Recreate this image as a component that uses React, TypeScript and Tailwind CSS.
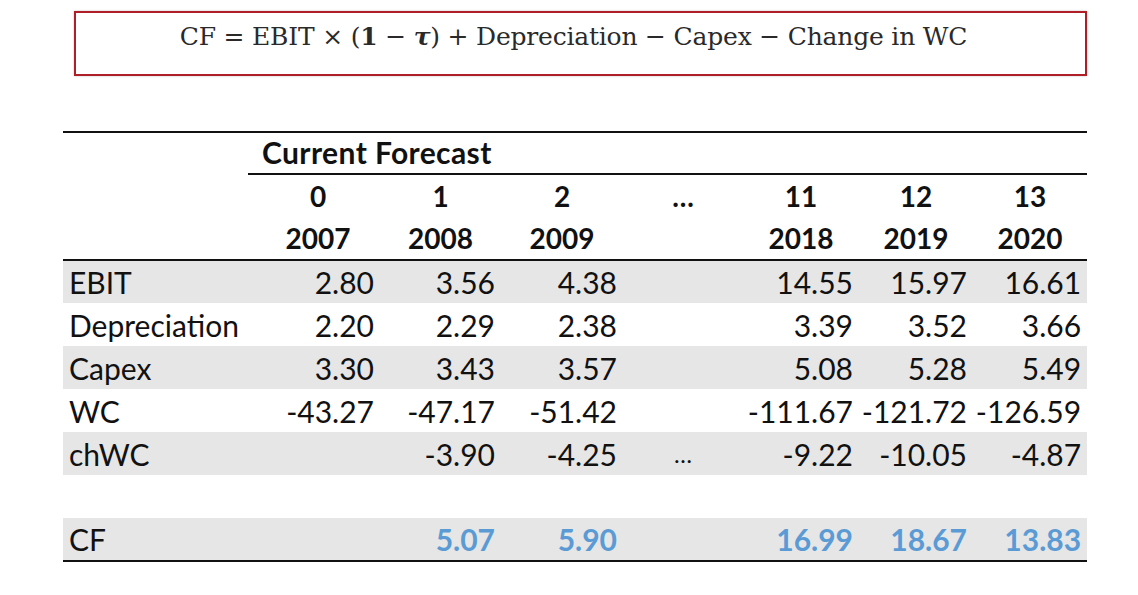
import React from "react";

const rows = [
  { label: "EBIT", vals: ["2.80", "3.56", "4.38", "", "14.55", "15.97", "16.61"], shade: true },
  { label: "Depreciation", vals: ["2.20", "2.29", "2.38", "", "3.39", "3.52", "3.66"], shade: false },
  { label: "Capex", vals: ["3.30", "3.43", "3.57", "", "5.08", "5.28", "5.49"], shade: true },
  { label: "WC", vals: ["-43.27", "-47.17", "-51.42", "", "-111.67", "-121.72", "-126.59"], shade: false },
  { label: "chWC", vals: ["", "-3.90", "-4.25", "…", "-9.22", "-10.05", "-4.87"], shade: true },
];

const periods = ["0", "1", "2", "…", "11", "12", "13"];
const years = ["2007", "2008", "2009", "", "2018", "2019", "2020"];

export default function App() {
  return (
    <div className="w-[1138px] h-[595px] bg-white text-[#111] overflow-hidden">
      <div className="ml-[74px] mt-[11px] w-[1013px] h-[65px] border-2 border-[#b01f27] shadow-[0_0_2px_rgba(0,0,0,0.25)] flex justify-center pt-[5px]">
        <div className="font-['DejaVu_Serif',serif] text-[25px] text-[#2a2a2a] tracking-[-0.2px] -ml-[14px]">
          CF = EBIT × (<span className="font-bold">1</span> − <span className="font-bold italic">τ</span>) + Depreciation − Capex − Change in WC
        </div>
      </div>

      <table className="ml-[63px] mt-[55px] w-[1024px] table-fixed border-collapse font-['Lato',sans-serif] text-[30px] leading-none">
        <colgroup>
          <col className="w-[185px]" />
          <col className="w-[132px]" />
          <col className="w-[121px]" />
          <col className="w-[122px]" />
          <col className="w-[120px]" />
          <col className="w-[116px]" />
          <col className="w-[114px]" />
          <col className="w-[114px]" />
        </colgroup>
        <thead>
          <tr className="h-[42px] border-t-2 border-[#111]">
            <th></th>
            <th colSpan={7} className="text-left font-bold text-[30px] tracking-[0.4px] pl-[14px] align-bottom pb-[6px] border-b-2 border-[#111]">
              Current Forecast
            </th>
          </tr>
          <tr className="h-[43px]">
            <th></th>
            {periods.map((p, i) => (
              <th key={i} className={`text-center font-bold text-[28px] ${i === 0 ? "pl-2" : ""}`}>
                {p}
              </th>
            ))}
          </tr>
          <tr className="h-[43px] border-b-2 border-[#111]">
            <th></th>
            {years.map((y, i) => (
              <th key={i} className={`text-center font-bold text-[28px] ${i === 0 ? "pl-2" : ""}`}>
                {y}
              </th>
            ))}
          </tr>
        </thead>
        <tbody>
          {rows.map((r) => (
            <tr key={r.label} className={`h-[43px] ${r.shade ? "bg-[#e6e6e6]" : ""}`}>
              <td className="pl-[6px] text-left">{r.label}</td>
              {r.vals.map((v, i) => (
                <td key={i} className={i === 3 ? "text-center text-[24px]" : "text-right pr-[6px]"}>
                  {v}
                </td>
              ))}
            </tr>
          ))}
          <tr className="h-[43px]">
            <td colSpan={8}></td>
          </tr>
          <tr className="h-[43px] bg-[#e6e6e6] border-b-2 border-[#111]">
            <td className="pl-[6px] text-left">CF</td>
            {["", "5.07", "5.90", "", "16.99", "18.67", "13.83"].map((v, i) => (
              <td key={i} className="text-right pr-[6px] font-bold text-[#5b9bd5]">
                {v}
              </td>
            ))}
          </tr>
        </tbody>
      </table>
    </div>
  );
}
